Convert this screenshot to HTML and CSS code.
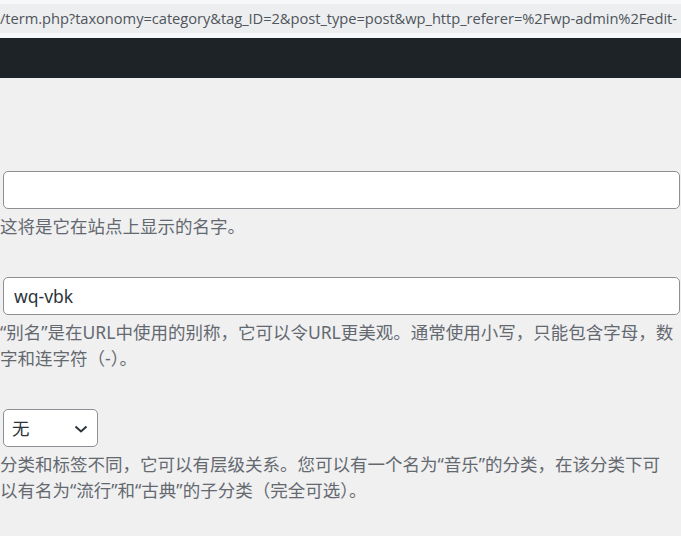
FILE: index.html
```html
<!DOCTYPE html>
<html lang="zh-CN">
<head>
    <meta charset="UTF-8">
    <meta name="viewport" content="width=device-width, initial-scale=1.0">
    <title>编辑分类</title>
    <link rel="stylesheet" href="styles.css">
</head>
<body>

<div class="browser-bar">
    <div class="url-bar">/term.php?taxonomy=category&amp;tag_ID=2&amp;post_type=post&amp;wp_http_referer=%2Fwp-admin%2Fedit-</div>
</div>

<div class="admin-bar"></div>

<div class="wrap">
    <div class="form-field">
        <input class="text-input" type="text" value="">
        <p class="description">这将是它在站点上显示的名字。</p>
    </div>

    <div class="form-field">
        <input class="text-input" type="text" value="wq-vbk">
        <p class="description">“别名”是在URL中使用的别称，它可以令URL更美观。通常使用小写，只能包含字母，数字和连字符（-）。</p>
    </div>

    <div class="form-field">
        <div class="select-wrap">
            <select class="parent-select">
                <option>无</option>
            </select>
            <svg class="chevron" width="14" height="8" viewBox="0 0 14 8">
                <path d="M1.5 1.5 L7 6.5 L12.5 1.5" fill="none" stroke="#2c3338" stroke-width="2"/>
            </svg>
        </div>
        <p class="description">分类和标签不同，它可以有层级关系。您可以有一个名为“音乐”的分类，在该分类下可以有名为“流行”和“古典”的子分类（完全可选）。</p>
    </div>
</div>

</body>
</html>
```

FILE: styles.css
```css
body {
    margin: 0;
    background-color: #f0f0f1;
    font-family: "Noto Sans", "Noto Sans CJK SC", sans-serif;
    overflow: hidden;
}

.browser-bar {
    height: 38px;
    padding-top: 4px;
    box-sizing: border-box;
    background-color: #f7f8fa;
}

.url-bar {
    height: 29px;
    line-height: 29px;
    background-color: #eceef0;
    color: #50555b;
    font-family: "Open Sans", sans-serif;
    font-size: 14.7px;
    letter-spacing: -0.05px;
    white-space: nowrap;
    overflow: hidden;
}

.admin-bar {
    height: 40px;
    background-color: #1d2327;
}

.wrap {
    padding-top: 93px;
}

.form-field {
    margin-bottom: 38px;
}

.text-input {
    display: block;
    box-sizing: border-box;
    width: 677px;
    height: 38px;
    margin: 0 0 0 3px;
    padding: 0 10px;
    border: 1px solid #8c8f94;
    border-radius: 5px;
    background-color: #fff;
    color: #2c3338;
    font-family: "Noto Sans", "Noto Sans CJK SC", sans-serif;
    font-size: 17.5px;
    outline: none;
}

.description {
    max-width: 674px;
    margin: 4px 0 0 0;
    color: #646970;
    font-size: 17.5px;
    line-height: 26px;
}

.select-wrap {
    position: relative;
    width: 95px;
    margin-left: 3px;
}

.parent-select {
    display: block;
    appearance: none;
    -webkit-appearance: none;
    box-sizing: border-box;
    width: 95px;
    height: 38px;
    padding: 0 8px;
    border: 1px solid #8c8f94;
    border-radius: 5px;
    background-color: #fff;
    color: #2c3338;
    font-family: "Noto Sans", "Noto Sans CJK SC", sans-serif;
    font-size: 17.5px;
}

.chevron {
    position: absolute;
    left: 71px;
    top: 16px;
    pointer-events: none;
}
```
